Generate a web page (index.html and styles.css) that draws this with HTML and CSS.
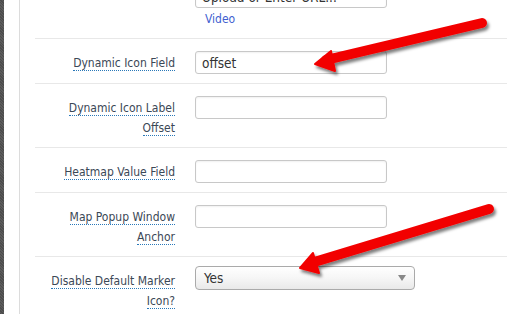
FILE: index.html
```html
<!DOCTYPE html>
<html lang="en">
<head>
  <meta charset="UTF-8">
  <title>Map Settings</title>
  <link rel="stylesheet" href="styles.css">
</head>
<body>
  <div class="page">
    <div class="sidebar"></div>
    <div class="gutter"></div>
    <div class="panel">
      <!-- tail of the previous field, scrolled off the top -->
      <div class="row row-top">
        <div class="label"></div>
        <div class="field">
          <input class="text" type="text" value="Upload or Enter URL...">
          <a class="link" href="#">Video</a>
        </div>
      </div>

      <div class="row">
        <div class="label"><span>Dynamic Icon Field</span></div>
        <div class="field"><input class="text" type="text" value="offset"></div>
      </div>

      <div class="row">
        <div class="label"><span>Dynamic Icon Label</span><br><span>Offset</span></div>
        <div class="field"><input class="text" type="text"></div>
      </div>

      <div class="row">
        <div class="label"><span>Heatmap Value Field</span></div>
        <div class="field"><input class="text" type="text"></div>
      </div>

      <div class="row">
        <div class="label"><span>Map Popup Window</span><br><span>Anchor</span></div>
        <div class="field"><input class="text" type="text"></div>
      </div>

      <div class="row">
        <div class="label"><span>Disable Default Marker</span><br><span>Icon?</span></div>
        <div class="field">
          <div class="select">
            <span>Yes</span>
            <span class="caret"></span>
          </div>
        </div>
      </div>
    </div>
  </div>

  <!-- red annotation arrows drawn over the form -->
  <svg class="arrows" width="507" height="314" viewBox="0 0 507 314">
    <defs>
      <filter id="shadow" x="-10%" y="-30%" width="130%" height="180%">
        <feDropShadow dx="2" dy="3" stdDeviation="1.5" flood-color="#000" flood-opacity="0.5"/>
      </filter>
    </defs>
    <g filter="url(#shadow)" fill="#f20000" stroke="#f20000" stroke-linejoin="round">
      <line x1="482" y1="23" x2="326" y2="60" stroke-width="10" stroke-linecap="round"/>
      <polygon points="315,64 331,51 335,71" stroke-width="2"/>
      <line x1="489" y1="209" x2="311" y2="263" stroke-width="10" stroke-linecap="round"/>
      <polygon points="300,268 313,253 319,273" stroke-width="2"/>
    </g>
  </svg>
</body>
</html>
```

FILE: styles.css
```css
body {
  margin: 0;
  background-color: #fff;
  font-family: "DejaVu Sans Condensed", "DejaVu Sans", sans-serif;
  overflow: hidden;
}

.page {
  display: flex;
  height: 314px;
}

.sidebar {
  width: 4px;
  background-color: #555;
  background-image: repeating-linear-gradient(45deg, #4d4d4d 0 1px, #5c5c5c 1px 2px);
}

.gutter {
  width: 15px;
}

.panel {
  flex: 1;
  border-left: 1px solid #dcdcdc;
  padding-left: 15px;
}

.row {
  display: grid;
  grid-template-columns: 140px 1fr;
  column-gap: 20px;
  padding: 12px 0 9px;
  border-top: 1px solid #e8e8e8;
}

.row-top {
  border-top: none;
  margin-top: -27px;
}

.label {
  padding-top: 2px;
  text-align: right;
  font-size: 12px;
  line-height: 20px;
  color: #3b4856;
}

.label span {
  border-bottom: 1px dotted #2a78b8;
}

.field {
  display: flex;
  flex-direction: column;
  align-items: flex-start;
}

.text {
  box-sizing: border-box;
  width: 192px;
  height: 23px;
  margin: 0;
  padding: 0 6px;
  border: 1px solid #c8c8c8;
  border-radius: 3px;
  box-shadow: inset 0 1px 2px rgba(0, 0, 0, 0.06);
  font-family: "DejaVu Sans Condensed", "DejaVu Sans", sans-serif;
  font-size: 13.5px;
  color: #333;
}

.link {
  margin: 1px 0 0 10px;
  font-size: 12px;
  line-height: 20px;
  color: #3f5fd0;
  text-decoration: none;
}

.select {
  box-sizing: border-box;
  display: flex;
  align-items: center;
  justify-content: space-between;
  width: 220px;
  height: 24px;
  margin-top: -3px;
  padding: 0 8px;
  border: 1px solid #aaa;
  border-radius: 4px;
  background: linear-gradient(#fff 0%, #f6f6f6 50%, #e9e9e9 100%);
  font-size: 13.5px;
  color: #333;
}

.caret {
  width: 0;
  height: 0;
  border-left: 4px solid transparent;
  border-right: 4px solid transparent;
  border-top: 6px solid #888;
}

.arrows {
  position: absolute;
  top: 0;
  left: 0;
  pointer-events: none;
}
```
